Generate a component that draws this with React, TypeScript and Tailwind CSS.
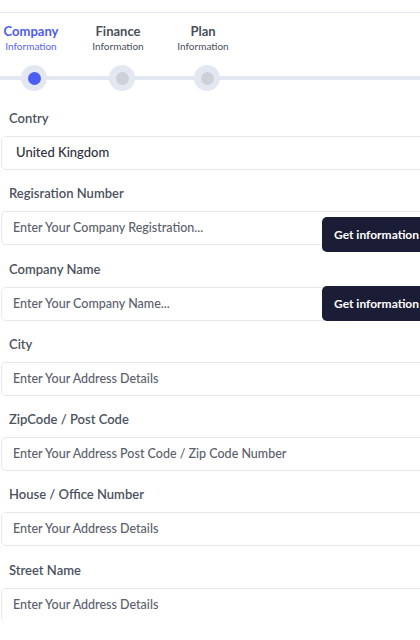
import React from "react";

const font = { fontFamily: "Lato, 'Open Sans', sans-serif" };

function Step({ title, active, w }: { title: string; active?: boolean; w: string }) {
  return (
    <div className={`flex flex-col items-center ${w}`}>
      <div className={`text-[13px] font-bold leading-[16px] ${active ? "text-[#4c5cf2]" : "text-[#4a4f5c]"}`}>{title}</div>
      <div className={`text-[10px] leading-[14px] ${active ? "text-[#5a66f0]" : "text-[#4a4f5c]"}`}>Information</div>
    </div>
  );
}

function Dot({ active }: { active?: boolean }) {
  return (
    <div className="w-[26px] h-[26px] rounded-full bg-[#e3e7f1] flex items-center justify-center shrink-0">
      <div className={`w-[13px] h-[13px] rounded-full ${active ? "bg-[#4c5ef2]" : "bg-[#cdd0d6]"}`} />
    </div>
  );
}

function Field({
  label,
  placeholder,
  value,
  button,
  buttonOffset,
  extra,
}: {
  label: string;
  placeholder?: string;
  value?: string;
  button?: boolean;
  buttonOffset?: boolean;
  extra?: boolean;
}) {
  return (
    <div className={extra ? "mb-[14px]" : "mb-[13px]"}>
      <div className="pl-[9px] text-[13px] leading-[20px] font-semibold text-[#4b5260] mb-[8px]">{label}</div>
      <div className="relative">
        <div className="h-[34px] w-[460px] ml-px rounded-[5px] border border-[#e6e8ef] bg-white flex items-center">
          {value ? (
            <span className="pl-[14px] text-[13px] font-medium text-[#2b303b]">{value}</span>
          ) : (
            <span className="pl-[11px] text-[12.5px] font-medium text-[#5a606c]">{placeholder}</span>
          )}
        </div>
        {button && (
          <div
            className={`absolute left-[322px] ${buttonOffset ? "top-[6px]" : "top-[-1px]"} h-[35px] w-[120px] rounded-[5px] bg-[#1b1c35] text-white text-[12px] font-bold flex items-center pl-[12px] whitespace-nowrap`}
          >
            Get information
          </div>
        )}
      </div>
    </div>
  );
}

export default function App() {
  return (
    <div className="w-[420px] h-[640px] overflow-hidden bg-white" style={font}>
      <div className="h-[620px] overflow-hidden">
        <div className="h-[12px]" />
        <div className="h-px bg-[#e4e6f4] w-[440px]" />
        <div className="flex pt-[10px]">
          <Step title="Company" active w="w-[60px] ml-[1px]" />
          <Step title="Finance" w="w-[60px] ml-[27px]" />
          <Step title="Plan" w="w-[60px] ml-[25px]" />
        </div>
        <div className="relative h-[26px] mt-[12px] flex items-center">
          <div className="absolute left-0 right-0 top-[11px] h-[4px] bg-[#e3e7f1]" />
          <div className="relative flex items-center">
            <div className="ml-[21px]"><Dot active /></div>
            <div className="ml-[62px]"><Dot /></div>
            <div className="ml-[59px]"><Dot /></div>
          </div>
        </div>
        <div className="h-[17px]" />
        <div>
          <Field label="Contry" value="United Kingdom" />
          <Field label="Regisration Number" placeholder="Enter Your Company Registration..." button buttonOffset extra />
          <Field label="Company Name" placeholder="Enter Your Company Name..." button />
          <Field label="City" placeholder="Enter Your Address Details" />
          <Field label="ZipCode / Post Code" placeholder="Enter Your Address Post Code / Zip Code Number" />
          <Field label="House / Office Number" placeholder="Enter Your Address Details" extra />
          <Field label="Street Name" placeholder="Enter Your Address Details" />
        </div>
      </div>
    </div>
  );
}
